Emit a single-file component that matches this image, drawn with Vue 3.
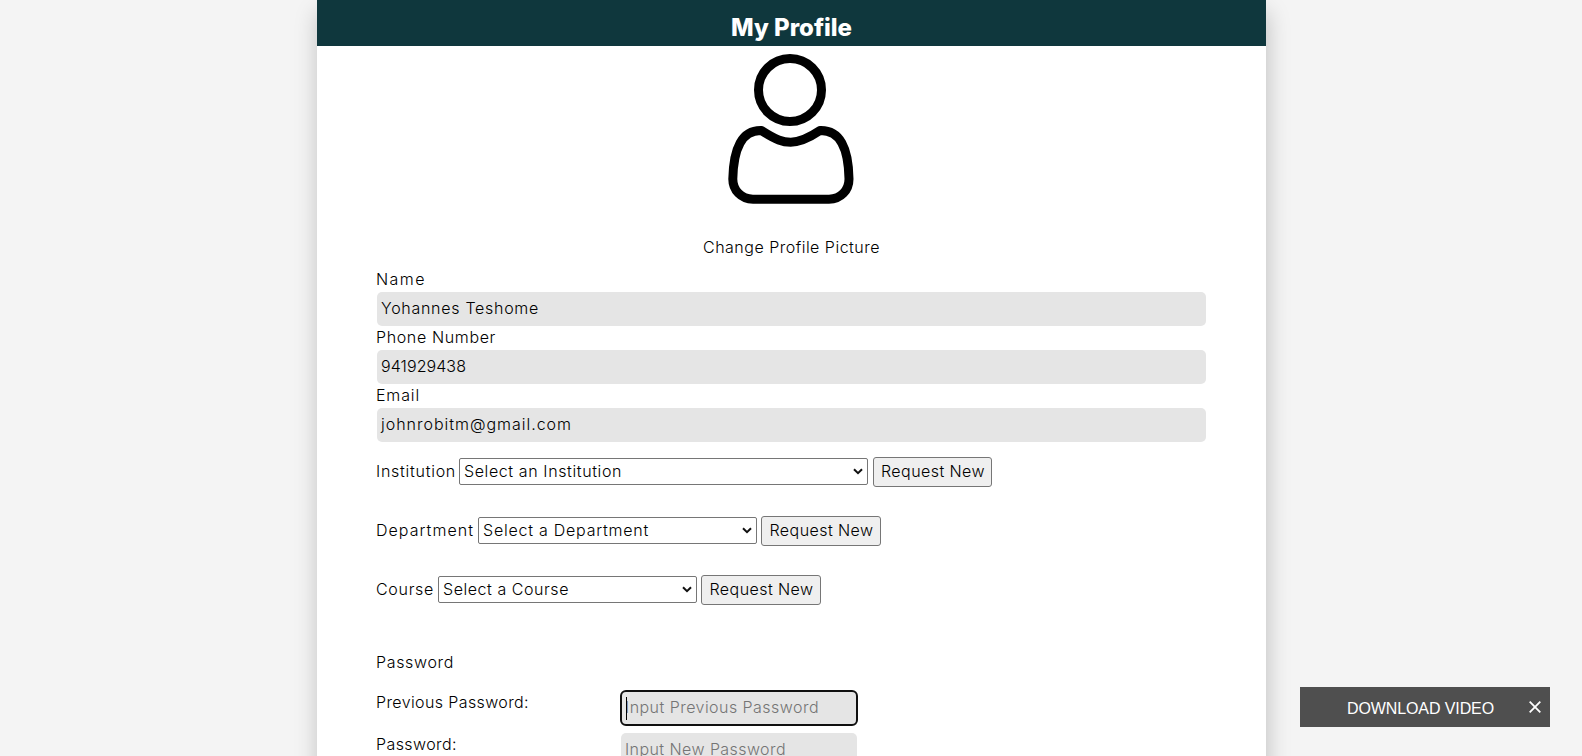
<script setup>
import { ref } from 'vue'

const fields = [
  { label: 'Name', lw: 50, value: 'Yohannes Teshome', vw: 158 },
  { label: 'Phone Number', lw: 120, value: '941929438', vw: 85 },
  { label: 'Email', lw: 44, value: 'johnrobitm@gmail.com', vw: 191 },
]
const choices = [
  { label: 'Institution', lw: 80, value: 'Select an Institution', vw: 158, width: 409, left: 82, gap: 5, bw: 119 },
  { label: 'Department', lw: 98, value: 'Select a Department', vw: 166, width: 279, left: 101, gap: 4, bw: 120 },
  { label: 'Course', lw: 58, value: 'Select a Course', vw: 126, width: 259, left: 61, gap: 4, bw: 120 },
]
const passwords = [
  { label: 'Previous Password:', lw: 153, hint: 'Input Previous Password', hw: 194, focused: true },
  { label: 'Password:', lw: 81, hint: 'Input New Password', hw: 161, focused: false },
]

// Tracks the letters of a label so that it spans the given width.
const vFit = {
  mounted(el, { value }) {
    const natural = el.getBoundingClientRect().width
    el.style.letterSpacing = (value - natural) / el.textContent.length + 'px'
  },
}
const toastOpen = ref(true)
</script>

<template>
  <div class="page">
    <main class="card">
      <header class="title"><span v-fit="121">My Profile</span></header>
      <div class="avatar">
        <svg width="150" height="158" viewBox="715 46 150 158" fill="none" stroke="#000" stroke-width="9">
          <circle cx="790" cy="90" r="31.5" />
          <path d="M761.500 130.600C776 140 783 142.200 790.700 142.200S806 140 820 130.600C840 130 848.500 148 849 179C849 190 841 199.200 829 199.200H753C741 199.200 732.800 190 732.800 179C733.500 148 742 130 761.500 130.600Z" />
        </svg>
      </div>
      <div class="change"><span v-fit="177">Change Profile Picture</span></div>

      <section class="fields">
        <div v-for="f in fields" :key="f.label">
          <div class="label"><span v-fit="f.lw">{{ f.label }}</span></div>
          <div class="input"><span v-fit="f.vw">{{ f.value }}</span></div>
        </div>
      </section>

      <section class="choices">
        <div v-for="c in choices" :key="c.label" class="choice">
          <div class="label" :style="{ width: c.left + 1 + 'px' }"><span v-fit="c.lw">{{ c.label }}</span></div>
          <div class="select" :style="{ width: c.width + 'px', marginRight: c.gap + 'px' }">
            <span v-fit="c.vw">{{ c.value }}</span>
            <svg width="10" height="7" viewBox="0 0 10 7" fill="none" stroke="#111" stroke-width="2">
              <path d="M1 1.200 5 5.200 9 1.200" />
            </svg>
          </div>
          <button class="request" :style="{ width: c.bw + 'px' }"><span v-fit="104">Request New</span></button>
        </div>
      </section>

      <div class="label heading"><span v-fit="78">Password</span></div>
      <section class="passwords">
        <div v-for="p in passwords" :key="p.label" class="password">
          <div class="label"><span v-fit="p.lw">{{ p.label }}</span></div>
          <div class="input hint" :class="{ focused: p.focused }"><span v-fit="p.hw">{{ p.hint }}</span></div>
        </div>
      </section>
    </main>

    <aside v-if="toastOpen" class="toast">
      <span v-fit="147">DOWNLOAD VIDEO</span>
      <svg width="12" height="12" viewBox="0 0 12 12" stroke="#fff" stroke-width="1.8" @click="toastOpen = false">
        <path d="M.7.7 11.300 11.300M11.300.7.7 11.300" />
      </svg>
    </aside>
  </div>
</template>

<style>
body { margin: 0; overflow: hidden; }
</style>

<style scoped>
.page {
  height: 756px;
  overflow: hidden;
  background: #f4f4f4;
  color: #000;
  font: 360 16px/24px Inter, "Open Sans", sans-serif;
  white-space: nowrap;
}
.page * { box-sizing: border-box; }
.card {
  width: 949px;
  height: 900px;
  margin-left: 317px;
  background: #fff;
  box-shadow: 1px 12px 22px rgba(0, 0, 0, .22);
}
.title {
  height: 46px;
  padding-top: 10px;
  background: #0f373d;
  color: #fff;
  font-size: 24px;
  font-weight: 800;
  line-height: 36px;
  text-align: center;
}
.avatar { height: 189px; padding-left: 398px; }
.avatar svg { display: block; }
.change { height: 33px; text-align: center; }
.fields { padding: 0 60px; }
.label { height: 24px; margin-left: -1px; line-height: 22px; }
.input {
  height: 34px;
  padding: 4px 4px;
  border-radius: 5px;
  background: #e5e5e5;
}
.choices {
  display: flex;
  flex-direction: column;
  gap: 29px;
  padding: 15px 60px 0;
}
.choice { display: flex; align-items: center; height: 30px; }
.select {
  display: flex;
  align-items: center;
  justify-content: space-between;
  height: 27px;
  margin-top: -1px;
  padding: 0 4px;
  border: 1px solid #767676;
  border-radius: 2px;
}
.select span { padding-bottom: 2px; }
.select svg { margin-top: -1px; }
.request {
  height: 30px;
  padding: 0 0 2px 1px;
  border: 1px solid #767676;
  border-radius: 3px;
  background: #efefef;
  color: #000;
  font: inherit;
}
.heading { margin: 46px 0 0 59px; }
.passwords { display: grid; gap: 8px; padding: 16px 60px 0; }
.password { display: grid; grid-template-columns: 244px 236px; height: 34px; }
.hint { position: relative; color: #757575; }
.focused { outline: 2px solid #101010; outline-offset: -1px; }
.focused::before {
  content: "";
  position: absolute;
  left: 5px;
  top: 6px;
  width: 1px;
  height: 23px;
  background: #000;
}
.toast {
  position: fixed;
  left: 1300px;
  top: 687px;
  display: flex;
  align-items: center;
  justify-content: space-between;
  width: 250px;
  height: 40px;
  padding: 0 9px 0 47px;
  background: #4f4f4f;
  color: #fff;
  font: 400 16px/24px "Liberation Sans", Arial, sans-serif;
}
.toast span { padding-top: 3px; }
</style>
